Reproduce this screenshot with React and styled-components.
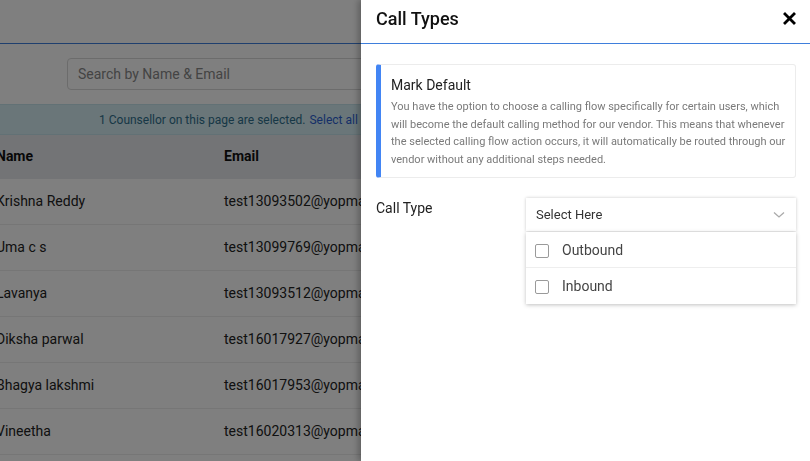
import styled, { createGlobalStyle } from "styled-components";

const GlobalStyle = createGlobalStyle`
  html, body { margin: 0; padding: 0; height: 100%; overflow: hidden; }
  body { font-family: Roboto, "Liberation Sans", sans-serif; background: #fff; color: #222; }
  * { box-sizing: border-box; }
`;

const counsellors = [
  { name: "Krishna Reddy", email: "test13093502@yopmail.com" },
  { name: "Uma c s", email: "test13099769@yopmail.com" },
  { name: "Lavanya", email: "test13093512@yopmail.com" },
  { name: "Diksha parwal", email: "test16017927@yopmail.com" },
  { name: "Bhagya lakshmi", email: "test16017953@yopmail.com" },
  { name: "Vineetha", email: "test16020313@yopmail.com" },
  { name: "Ravi", email: "test16020400@yopmail.com" },
];

const App = () => {
  return (
    <>
      <GlobalStyle />
      <Page>
        <TopBar />
        <SearchRow>
          <SearchInput placeholder="Search by Name & Email" />
        </SearchRow>
        <SelectionBar>
          1 Counsellor on this page are selected. <a>Select all</a>
        </SelectionBar>
        <Table>
          <HeadRow>
            <Cell>Name</Cell>
            <Cell>Email</Cell>
          </HeadRow>
          {counsellors.map((c) => (
            <Row key={c.email}>
              <Cell>{c.name}</Cell>
              <Cell>{c.email}</Cell>
            </Row>
          ))}
        </Table>
      </Page>
      <Overlay />
      <Drawer>
        <DrawerHeader>
          <h2>Call Types</h2>
          <Close aria-label="close">
            <svg width="13" height="13" viewBox="0 0 13 13">
              <path d="M2 2 L11 11 M11 2 L2 11" stroke="#000" strokeWidth="2.8" strokeLinecap="square" />
            </svg>
          </Close>
        </DrawerHeader>
        <DrawerBody>
          <InfoCard>
            <h3>Mark Default</h3>
            <p>
              You have the option to choose a calling flow specifically for certain users, which
              will become the default calling method for our vendor. This means that whenever
              the selected calling flow action occurs, it will automatically be routed through
              our vendor without any additional steps needed.
            </p>
          </InfoCard>
          <FieldRow>
            <Label>Call Type</Label>
            <SelectWrap>
              <SelectBox>
                <span>Select Here</span>
                <svg width="12" height="8" viewBox="0 0 12 8">
                  <path d="M1 1.5 L6 6 L11 1.5" fill="none" stroke="#aaa" strokeWidth="1.3" />
                </svg>
              </SelectBox>
              <Menu>
                <Option>
                  <Check />
                  Outbound
                </Option>
                <Option $last>
                  <Check />
                  Inbound
                </Option>
              </Menu>
            </SelectWrap>
          </FieldRow>
        </DrawerBody>
      </Drawer>
    </>
  );
};

const Page = styled.div`
  height: 100vh;
  overflow: hidden;
`;

const TopBar = styled.div`
  height: 44px;
  border-bottom: 1px solid #3f7fdc;
`;

const SearchRow = styled.div`
  padding: 14px 0 14px 67px;
`;

const SearchInput = styled.input`
  width: 420px;
  height: 32px;
  border: 1px solid #d8d8d8;
  border-radius: 4px;
  padding: 0 10px;
  font-family: Roboto, "Liberation Sans", sans-serif;
  font-size: 14px;
  &::placeholder { color: #888; }
`;

const SelectionBar = styled.div`
  height: 31px;
  background: #d4ecf2;
  border-top: 1px solid #c4e2ea;
  border-bottom: 1px solid #c4e2ea;
  padding-left: 99px;
  display: flex;
  align-items: center;
  gap: 4px;
  font-size: 12px;
  color: #2f6f8c;
  white-space: nowrap;
  a { color: #2a5fd0; }
`;

const Table = styled.div`
  margin-left: -4px;
`;

const HeadRow = styled.div`
  display: grid;
  grid-template-columns: 228px 1fr;
  height: 44px;
  align-items: center;
  padding-bottom: 2px;
  background: #e6e8ed;
  font-weight: 700;
  font-size: 14px;
  color: #111;
`;

const Row = styled.div`
  display: grid;
  grid-template-columns: 228px 1fr;
  height: 46px;
  align-items: center;
  padding-bottom: 2px;
  border-bottom: 1px solid #ececec;
  font-size: 14px;
  color: #222;
`;

const Cell = styled.div`
  white-space: nowrap;
`;

const Overlay = styled.div`
  position: fixed;
  inset: 0;
  background: rgba(0, 0, 0, 0.5);
`;

const Drawer = styled.aside`
  position: fixed;
  top: 0;
  right: 0;
  bottom: 0;
  width: 449px;
  background: #fff;
  box-shadow: -3px 0 6px rgba(0, 0, 0, 0.25);
`;

const DrawerHeader = styled.div`
  height: 44px;
  display: flex;
  align-items: center;
  justify-content: space-between;
  padding: 0 14px 6px 15px;
  border-bottom: 1px solid #3f7fdc;
  h2 {
    margin: 0;
    font-size: 18px;
    font-weight: 500;
    color: #111;
  }
`;

const Close = styled.button`
  border: none;
  background: transparent;
  padding: 0;
  display: flex;
  cursor: pointer;
`;

const DrawerBody = styled.div`
  padding: 20px 14px 0 15px;
`;

const InfoCard = styled.div`
  border: 1px solid #ececec;
  border-left: 5px solid #4285f4;
  border-radius: 3px;
  padding: 12px 8px 9px 10px;
  h3 {
    margin: 0 0 5px;
    font-size: 14px;
    font-weight: 400;
    color: #222;
  }
  p {
    margin: 0;
    font-size: 11px;
    line-height: 17.5px;
    color: #7a7a7a;
  }
`;

const FieldRow = styled.div`
  display: grid;
  grid-template-columns: 150px 1fr;
  margin-top: 20px;
`;

const Label = styled.div`
  font-size: 14px;
  color: #222;
  padding-top: 2px;
`;

const SelectWrap = styled.div`
  display: flex;
  flex-direction: column;
  gap: 1px;
`;

const SelectBox = styled.div`
  height: 33px;
  display: flex;
  align-items: center;
  justify-content: space-between;
  padding: 0 11px 0 10px;
  background: #fff;
  box-shadow: 0 0 3px rgba(0, 0, 0, 0.22);
  font-size: 13px;
  color: #333;
`;

const Menu = styled.div`
  background: #fff;
  box-shadow: 0 1px 4px rgba(0, 0, 0, 0.25);
`;

const Option = styled.div`
  height: 36px;
  display: flex;
  align-items: center;
  gap: 13px;
  padding-left: 9px;
  font-size: 14px;
  color: #444;
  border-bottom: ${({ $last }) => ($last ? "none" : "1px solid #eee")};
`;

const Check = styled.span`
  width: 14px;
  height: 14px;
  border: 1px solid #9a9a9a;
  border-radius: 2px;
  background: #fff;
  margin-top: 2px;
`;

export default App;
